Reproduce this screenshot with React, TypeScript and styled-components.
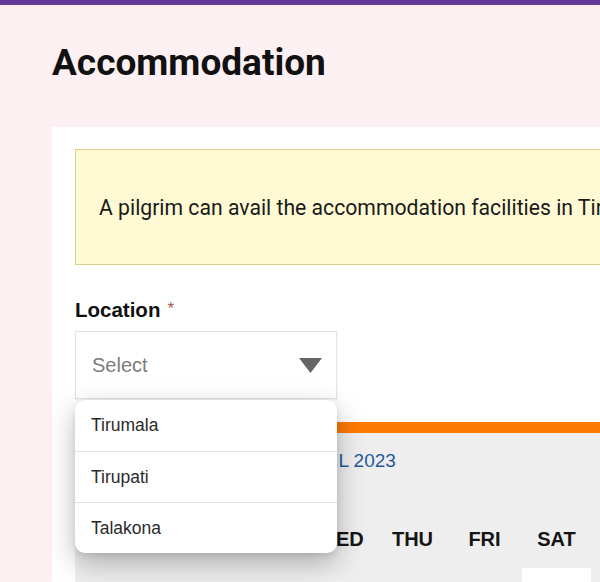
import styled, { createGlobalStyle } from "styled-components";

const GlobalStyle = createGlobalStyle`
  html, body {
    margin: 0;
    padding: 0;
    overflow: hidden;
    background: #fdf0f3;
  }
  * {
    box-sizing: border-box;
  }
`;

const TopBar = styled.div`
  height: 5px;
  background: #643a99;
`;

const Page = styled.main`
  width: 1000px;
  padding: 36px 0 0 52px;
`;

const Title = styled.h1`
  margin: 0;
  font-family: Roboto, "Liberation Sans", sans-serif;
  font-size: 37px;
  line-height: 44px;
  font-weight: 700;
  color: #111;
`;

const Card = styled.section`
  margin-top: 42px;
  background: #fff;
  padding: 22px 23px 40px;
  min-height: 600px;
`;

const Notice = styled.div`
  height: 116px;
  padding: 47px 23px 45px;
  background: #fffad3;
  border: 1px solid #d9cf82;
  font-family: Roboto, "Liberation Sans", sans-serif;
  font-size: 21.2px;
  line-height: 22px;
  color: #1a1a1a;
  white-space: nowrap;
  overflow: hidden;
`;

const Field = styled.div`
  margin-top: 32px;
`;

const Label = styled.label`
  display: block;
  font-family: "Liberation Sans", Arial, sans-serif;
  font-size: 20.5px;
  line-height: 24px;
  font-weight: 700;
  color: #111;
`;

const Required = styled.span`
  margin-left: 7px;
  color: #a85a52;
  font-weight: 400;
  font-size: 17px;
  vertical-align: 3px;
`;

const SelectWrap = styled.div`
  position: relative;
  width: 262px;
  margin-top: 9px;
`;

const SelectBox = styled.div`
  height: 68px;
  display: flex;
  align-items: center;
  justify-content: space-between;
  padding: 0 14px 0 16px;
  border: 1px solid #e3e3e3;
  box-shadow: 0 1px 2px rgba(0, 0, 0, 0.06);
  background: #fff;
  font-family: "Liberation Sans", Arial, sans-serif;
  font-size: 20px;
  color: #7c7c7c;
`;

const Menu = styled.ul`
  position: absolute;
  top: calc(100% + 1px);
  left: 0;
  right: 0;
  margin: 0;
  padding: 0;
  list-style: none;
  background: #fff;
  border-radius: 10px;
  box-shadow: 0 10px 28px rgba(0, 0, 0, 0.28), 0 2px 6px rgba(0, 0, 0, 0.08);
  z-index: 10;
  overflow: hidden;
`;

const MenuItem = styled.li`
  height: 51px;
  display: flex;
  align-items: center;
  padding-left: 16px;
  font-family: "Liberation Sans", Arial, sans-serif;
  font-size: 17.5px;
  color: #2a2a2a;

  & + & {
    border-top: 1px solid #e4e4e4;
  }
`;

const Calendar = styled.div`
  margin-top: 23px;
  width: 538px;
  background: #eeeeee;
  border-top: 11px solid #fd7a05;
  padding: 17px 22px 0 15px;
  min-height: 200px;
`;

const MonthTitle = styled.div`
  text-align: center;
  font-family: "Liberation Sans", Arial, sans-serif;
  font-size: 19px;
  line-height: 22px;
  color: #245a9c;
  padding-left: 9px;
`;

const Grid = styled.div`
  display: grid;
  grid-template-columns: repeat(7, 69px);
  column-gap: 3px;
`;

const DayHead = styled(Grid)`
  margin-top: 56px;
`;

const DayName = styled.div`
  text-align: center;
  font-family: "Liberation Sans", Arial, sans-serif;
  font-size: 20px;
  line-height: 23px;
  font-weight: 700;
  color: #151515;
`;

const Days = styled(Grid)`
  margin-top: 17px;
`;

const DayCell = styled.div<{ $empty?: boolean }>`
  height: 60px;
  background: ${({ $empty }) => ($empty ? "transparent" : "#fff")};
`;

const Caret = () => (
  <svg width="23" height="15" viewBox="0 0 23 15" aria-hidden>
    <path d="M0 0 H23 L11.5 15 Z" fill="#666" />
  </svg>
);

const dayNames = ["SUN", "MON", "TUE", "WED", "THU", "FRI", "SAT"];
const locations = ["Tirumala", "Tirupati", "Talakona"];

export default function App() {
  return (
    <>
      <GlobalStyle />
      <TopBar />
      <Page>
        <Title>Accommodation</Title>
        <Card>
          <Notice>
            A pilgrim can avail the accommodation facilities in Tirumala,
            Tirupati and Talakona.
          </Notice>
          <Field>
            <Label>
              Location<Required>*</Required>
            </Label>
            <SelectWrap>
              <SelectBox>
                <span>Select</span>
                <Caret />
              </SelectBox>
              <Menu>
                {locations.map((loc) => (
                  <MenuItem key={loc}>{loc}</MenuItem>
                ))}
              </Menu>
            </SelectWrap>
          </Field>
          <Calendar>
            <MonthTitle>APRIL 2023</MonthTitle>
            <DayHead>
              {dayNames.map((d) => (
                <DayName key={d}>{d}</DayName>
              ))}
            </DayHead>
            <Days>
              {dayNames.map((d, i) => (
                <DayCell key={d} $empty={i < 6} />
              ))}
            </Days>
          </Calendar>
        </Card>
      </Page>
    </>
  );
}
